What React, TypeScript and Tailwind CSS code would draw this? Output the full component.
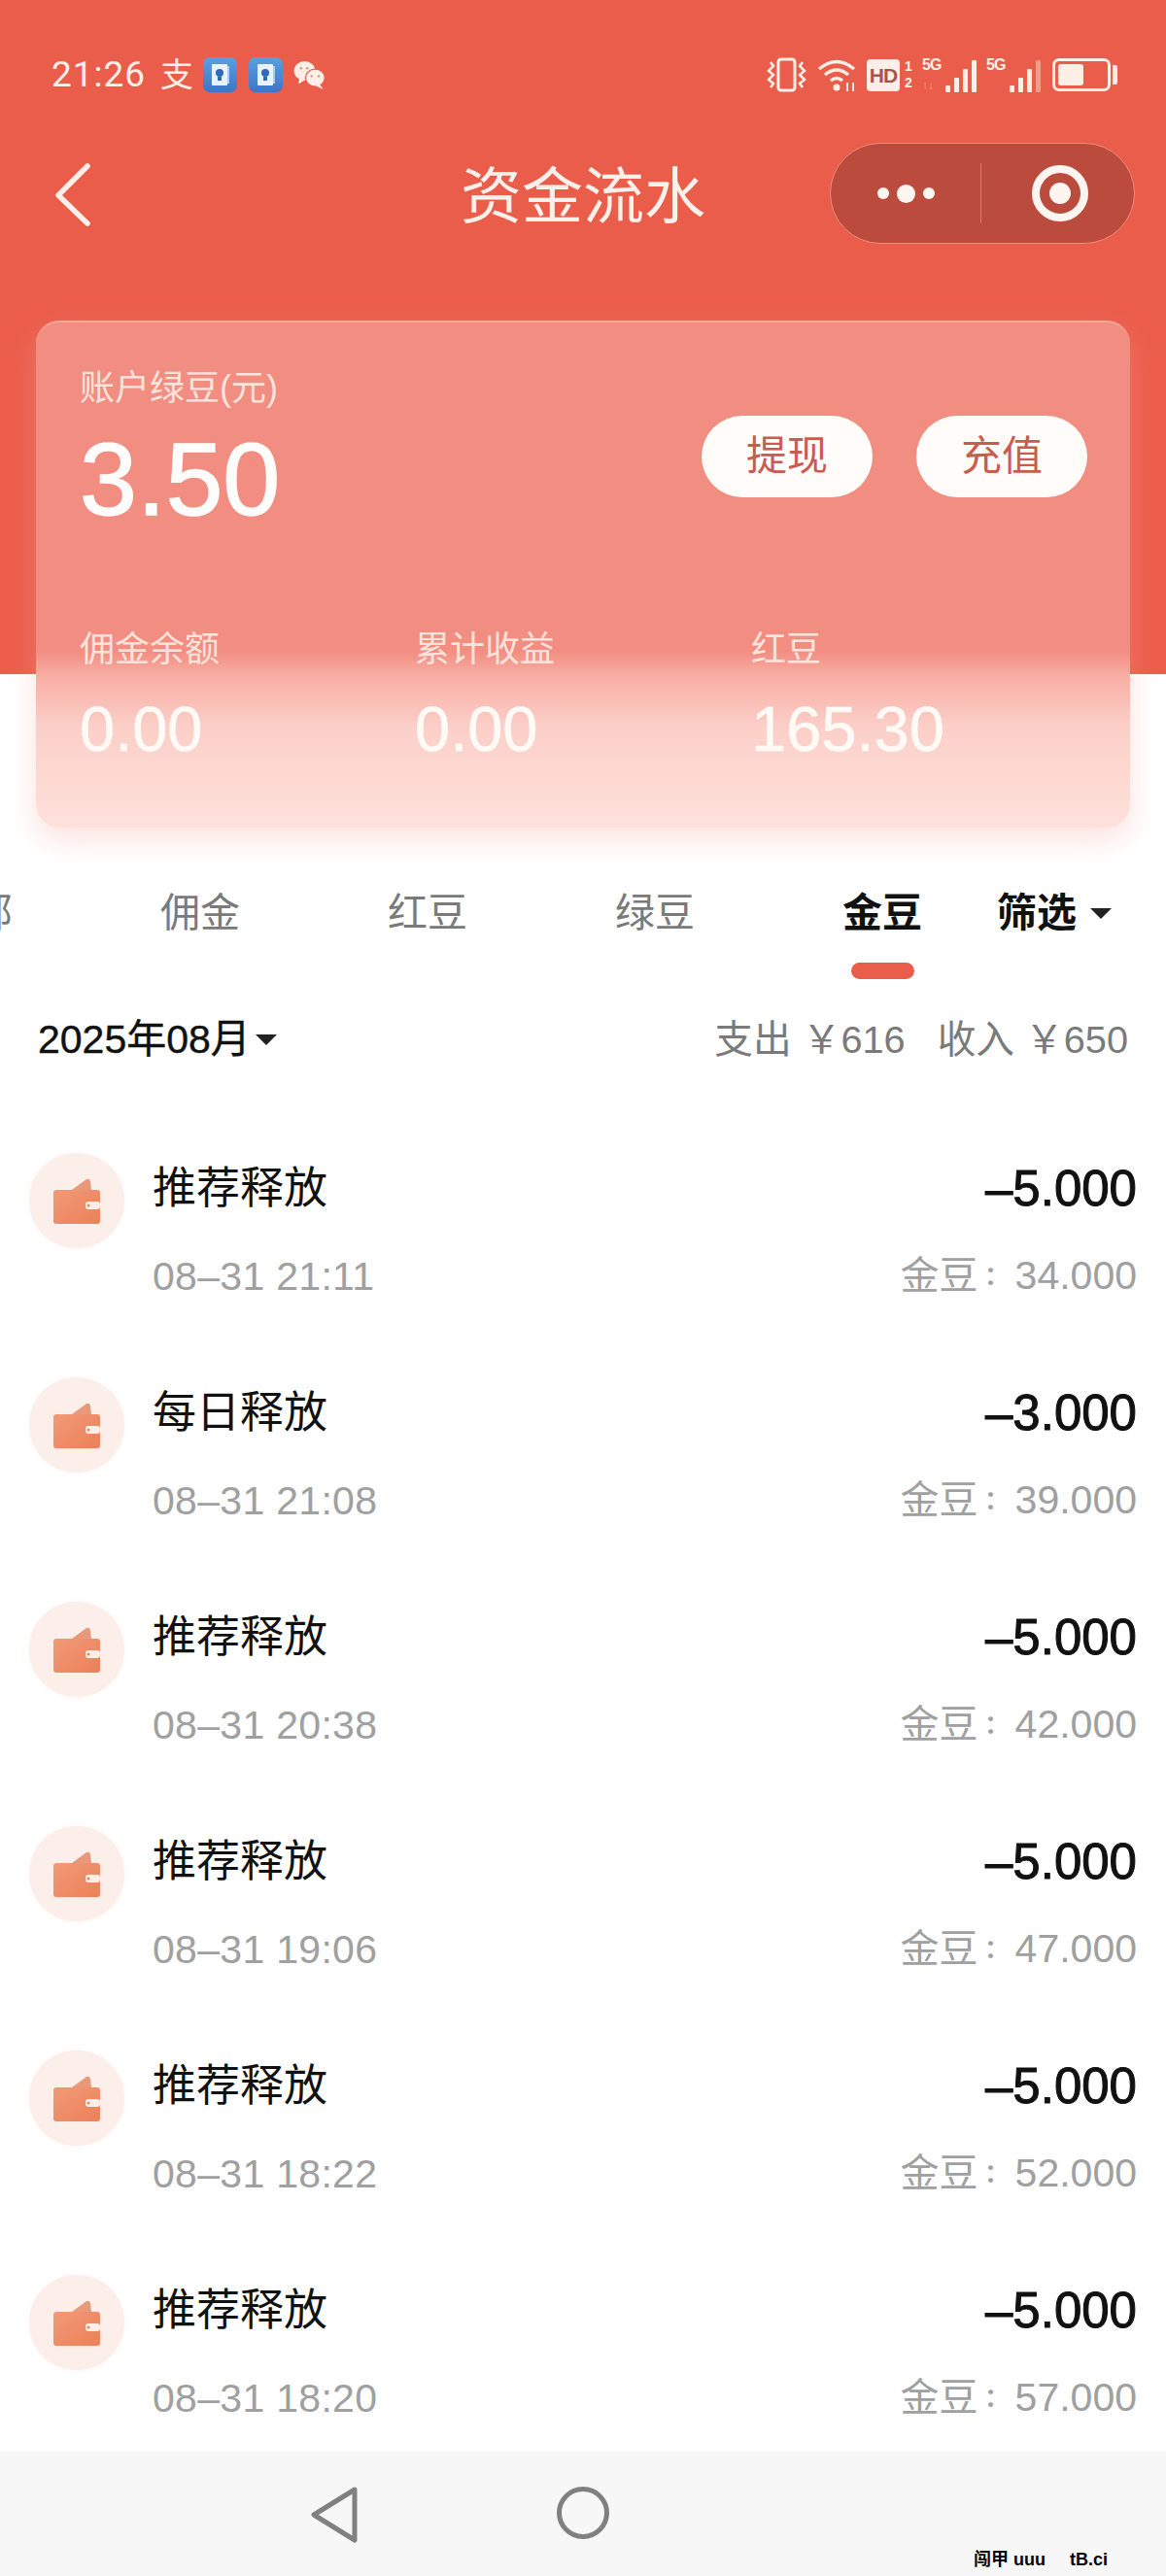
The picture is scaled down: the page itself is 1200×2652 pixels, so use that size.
import React from "react";

const cjk = "font-['Liberation_Sans','Noto_Sans_CJK_SC',sans-serif]";

const rows = [
  { t: "推荐释放", d: "08–31 21:11", a: "–5.000", b: "34.000" },
  { t: "每日释放", d: "08–31 21:08", a: "–3.000", b: "39.000" },
  { t: "推荐释放", d: "08–31 20:38", a: "–5.000", b: "42.000" },
  { t: "推荐释放", d: "08–31 19:06", a: "–5.000", b: "47.000" },
  { t: "推荐释放", d: "08–31 18:22", a: "–5.000", b: "52.000" },
  { t: "推荐释放", d: "08–31 18:20", a: "–5.000", b: "57.000" },
];

function Wallet() {
  return (
    <svg width="48" height="47" viewBox="0 0 48 47">
      <defs>
        <linearGradient id="w" x1="0" y1="0" x2="1" y2="1">
          <stop offset="0" stopColor="#f19a78" />
          <stop offset="1" stopColor="#ec8058" />
        </linearGradient>
      </defs>
      <path d="M19 12 L34 1 Q37 0 38 3 L39 12 Z" fill="#e8997c" />
      <rect x="0" y="12" width="48" height="35" rx="3" fill="url(#w)" />
      <rect x="33" y="24" width="15" height="8" rx="3" fill="#fdeee8" />
      <circle cx="36" cy="28" r="1.6" fill="#ee8a62" />
    </svg>
  );
}

function Row({ t, d, a, b }: { t: string; d: string; a: string; b: string }) {
  return (
    <div className="h-[231px] pl-[30px] pr-[30px] flex items-start">
      <div className="w-[98px] h-[98px] mt-[20px] rounded-full bg-[#fceee9] shadow-[0_0_4px_#fdf3ef] flex items-center justify-center shrink-0">
        <Wallet />
      </div>
      <div className="ml-[29px] pt-[29px]">
        <div className="text-[45px] leading-[56px] text-[#111]">{t}</div>
        <div className="mt-[34px] text-[41px] leading-[56px] tracking-[0.3px] text-[#a0a0a0]">{d}</div>
      </div>
      <div className="ml-auto pt-[28px] text-right">
        <div className="text-[51px] leading-[58px] text-[#111] [-webkit-text-stroke:1px_#111]">{a}</div>
        <div className="mt-[32px] text-[41px] leading-[56px] text-[#a0a0a0] flex items-center justify-end">
          <span className="text-[40px] leading-[56px]">金豆</span>
          <span className="w-[38px] text-left text-[26px] leading-[56px] font-bold font-['Noto_Sans_CJK_TC',sans-serif]">：</span>
          <span className="leading-[56px]">{b}</span>
        </div>
      </div>
    </div>
  );
}

function Signal({ label, arrows, faded }: { label: string; arrows?: boolean; faded?: boolean }) {
  const bars = [7, 15, 24, 33];
  return (
    <div className="relative w-[56px] h-[36px] flex items-end justify-end gap-[4px]">
      <span className="absolute left-0 top-0 text-[16px] leading-[16px] tracking-[-1px] font-bold">{label}</span>
      {arrows && <span className="absolute left-0 bottom-0 text-[12px] leading-[13px] text-[#f49a88] font-bold">↑↓</span>}
      {bars.map((h, i) => (
        <div
          key={i}
          className={`w-[5px] rounded-[1px] ${faded && i === 3 ? "bg-[#f49a88]" : "bg-[#fdeee6]"}`}
          style={{ height: h }}
        />
      ))}
    </div>
  );
}

function Stat({ label, value, w }: { label: string; value: string; w: string }) {
  return (
    <div className={w}>
      <div className="text-[36px] leading-[44px] text-[#fbe3dc]">{label}</div>
      <div className="mt-[22px] text-[65px] leading-[76px] text-[#fffaf6] [-webkit-text-stroke:0.6px_#fffaf6]">{value}</div>
    </div>
  );
}

export default function App() {
  return (
    <div className={`${cjk} relative w-[1200px] h-[2652px] overflow-hidden flex flex-col bg-[linear-gradient(#eb5d4b_694px,#ffffff_694px)]`}>
      <div className="h-[154px] pt-[57px] pl-[53px] pr-[50px] flex items-start justify-between">
        <div className="flex items-center h-[40px]">
          <span className="text-[37px] leading-[40px] tracking-[1px] text-[#fdeee6] font-['Roboto',sans-serif] w-[100px]">21:26</span>
          <span className="ml-[12px] text-[34px] leading-[40px] text-[#fdeee6] w-[34px]">支</span>
          <div className="ml-[10px] flex gap-[12px]">
            {[0, 1].map((i) => (
              <div key={i} className="w-[35px] h-[36px] rounded-[7px] bg-[linear-gradient(#5a9fe0,#3f74c8)] flex items-center justify-center">
                <svg width="18" height="22" viewBox="0 0 18 22">
                  <rect width="16" height="22" rx="1" fill="#e6f2fc" />
                  <rect x="16" y="2" width="2" height="18" fill="#a8cdf0" />
                  <circle cx="8" cy="9" r="4" fill="#2f6ab8" />
                  <rect x="6" y="13" width="4" height="4" fill="#2f6ab8" />
                </svg>
              </div>
            ))}
          </div>
          <svg className="ml-[10px]" width="35" height="29" viewBox="0 0 35 32">
            <ellipse cx="12" cy="11" rx="12" ry="11" fill="#fdeee6" />
            <path d="M6 19 L5 26 L13 21 Z" fill="#fdeee6" />
            <ellipse cx="24" cy="19" rx="11" ry="10" fill="#fdeee6" stroke="#eb5d4b" strokeWidth="1.5" />
            <path d="M29 26 L33 32 L25 28 Z" fill="#fdeee6" />
            <circle cx="8" cy="8" r="1.4" fill="#c89a8c" />
            <circle cx="15" cy="8" r="1.4" fill="#c89a8c" />
            <circle cx="20" cy="17" r="1.3" fill="#c89a8c" />
            <circle cx="28" cy="17" r="1.3" fill="#c89a8c" />
          </svg>
        </div>
        <div className="flex items-center h-[40px] text-[#fdeee6]">
          <svg width="43" height="36" viewBox="0 0 43 36" fill="none" stroke="#fdeee6">
            <rect x="13" y="2" width="17" height="32" rx="3" strokeWidth="3" />
            <path d="M5 5 L8 9 L3 14 L8 18 L3 23 L8 27 L5 31 M38 5 L35 9 L40 14 L35 18 L40 23 L35 27 L38 31" strokeWidth="2.5" />
          </svg>
          <svg className="ml-[10px]" width="42" height="35" viewBox="0 0 42 35" fill="none" stroke="#fdeee6" strokeWidth="3.5">
            <path d="M2 11 Q20 -4 38 11 M8 17 Q20 7 32 17 M14 23 Q20 18 26 23" />
            <circle cx="20" cy="30" r="3.5" fill="#fdeee6" stroke="none" />
            <path d="M31 25 V34 M37 25 V34" strokeWidth="2" />
          </svg>
          <div className="ml-[9px] w-[34px] h-[33px] rounded-[4px] bg-[#fdeee6] text-[#a8564a] text-[21px] leading-[33px] tracking-[-1px] text-center font-bold">HD</div>
          <div className="ml-[5px] w-[9px] text-[14px] leading-[17px] font-bold">1<br />2</div>
          <div className="ml-[9px]"><Signal label="5G" arrows /></div>
          <div className="ml-[10px]"><Signal label="5G" faded /></div>
          <div className="ml-[12px] w-[60px] h-[34px] rounded-[7px] border-[3px] border-[#fdeee6] p-[3px]">
            <div className="w-[26px] h-full rounded-[3px] bg-[#fdeee6]" />
          </div>
          <div className="ml-[2px] w-[5px] h-[20px] rounded-r-[2px] bg-[#fdeee6]" />
        </div>
      </div>

      <div className="h-[176px] pl-[50px] pr-[32px] flex items-start">
        <svg className="mt-[10px]" width="50" height="72" viewBox="0 0 50 72" fill="none" stroke="#fdf0ea" strokeWidth="5.5" strokeLinecap="round" strokeLinejoin="round">
          <path d="M40 7 L10 37 L40 66" />
        </svg>
        <div className="ml-[374px] mt-[10px] text-[63px] leading-[76px] text-[#fdf0ea]">资金流水</div>
        <div className="ml-auto w-[314px] h-[104px] -mt-[7px] rounded-full bg-[#bb4c3d] border border-[#ef8c7c] flex items-center">
          <div className="w-[154px] flex items-center justify-center gap-[8px]">
            <div className="w-[12px] h-[12px] rounded-full bg-[#fdf5f0]" />
            <div className="w-[19px] h-[19px] rounded-full bg-[#fdf5f0]" />
            <div className="w-[12px] h-[12px] rounded-full bg-[#fdf5f0]" />
          </div>
          <div className="w-px h-[62px] bg-[#df7b6b]" />
          <div className="flex-1 flex items-center justify-center pl-[4px]">
            <div className="w-[58px] h-[58px] rounded-full border-[8px] border-[#fdf5f0] flex items-center justify-center">
              <div className="w-[22px] h-[22px] rounded-full bg-[#fdf5f0]" />
            </div>
          </div>
        </div>
      </div>

      <div className="mx-[37px] h-[522px] rounded-[24px] border-t-2 border-[#f9a99c] bg-[linear-gradient(#f28d81_0%,#f28d81_65%,#f8aea4_70%,#fbcfc8_80%,#fdd9d2_90%,#fee0da_100%)] shadow-[0_12px_30px_rgba(245,170,160,0.35)] pl-[45px] pr-[46px] pt-[46px]">
        <div className="flex justify-between">
          <div>
            <div className="text-[36px] leading-[44px] text-[#fbe3dc]">账户绿豆(元)</div>
            <div className="mt-[16px] text-[106px] leading-[110px] text-[#fffdfb] [-webkit-text-stroke:1.5px_#fffdfb]">3.50</div>
          </div>
          <div className="flex gap-[45px] mt-[50px] -mr-[2px]">
            <div className="w-[176px] h-[84px] rounded-full bg-[#fffcfa] text-[#c85c4e] text-[42px] leading-[84px] text-center">提现</div>
            <div className="w-[176px] h-[84px] rounded-full bg-[#fffcfa] text-[#c85c4e] text-[42px] leading-[84px] text-center">充值</div>
          </div>
        </div>
        <div className="flex mt-[99px]">
          <Stat label="佣金余额" value="0.00" w="w-[345px]" />
          <Stat label="累计收益" value="0.00" w="w-[346px]" />
          <Stat label="红豆" value="165.30" w="w-auto" />
        </div>
      </div>

      <div className="h-[148px] mt-[24px]">
        <div className="flex -ml-[145px] pt-[36px] text-[41px] leading-[56px] text-[#7a7a7a]">
          <div className="w-[234px] shrink-0 text-center">全部</div>
          <div className="w-[234px] shrink-0 text-center">佣金</div>
          <div className="w-[234px] shrink-0 text-center">红豆</div>
          <div className="w-[234px] shrink-0 text-center">绿豆</div>
          <div className="w-[234px] shrink-0 text-center relative text-[#111] font-bold">
            金豆
            <div className="absolute left-[85px] top-[79px] w-[65px] h-[17px] rounded-full bg-[#eb5d4b]" />
          </div>
          <div className="ml-[1px] flex items-center shrink-0 font-bold text-[#111]">
            筛选
            <div className="ml-[14px] w-0 h-0 border-x-[11px] border-x-transparent border-t-[11px] border-t-[#222]" />
          </div>
        </div>
      </div>

      <div className="h-[92px] pl-[39px] pr-[39px] flex items-center justify-between">
        <div className="flex items-center text-[#111] text-[41px] leading-[56px] [-webkit-text-stroke:0.4px_#111]">
          2025年08月
          <div className="ml-[5px] w-0 h-0 border-x-[11px] border-x-transparent border-t-[11px] border-t-[#222]" />
        </div>
        <div className="text-[#7a7a7a] text-[39.7px] leading-[56px] whitespace-pre">支出 ￥616   收入 ￥650</div>
      </div>

      <div className="mt-[51px] h-[1356px] overflow-hidden shrink-0 flex flex-col">
        {rows.map((r, i) => (
          <div key={i} className="shrink-0">
            <Row {...r} />
          </div>
        ))}
      </div>

      <div className="relative h-[129px] shrink-0 bg-[#f7f7f7] pl-[318px] pt-[36px] flex items-start">
        <svg width="52" height="60" viewBox="0 0 52 60" fill="none" stroke="#808080" strokeWidth="5" strokeLinejoin="round">
          <path d="M47 4 L5 30 L47 56 Z" />
        </svg>
        <div className="ml-[203px] mt-[1px] w-[54px] h-[54px] rounded-full border-[5px] border-[#808080]" />
        <div className="absolute left-[1002px] top-[102px] text-[18px] leading-[20px] font-bold text-black whitespace-pre">闯甲 uuu     tB.ci</div>
      </div>
    </div>
  );
}
